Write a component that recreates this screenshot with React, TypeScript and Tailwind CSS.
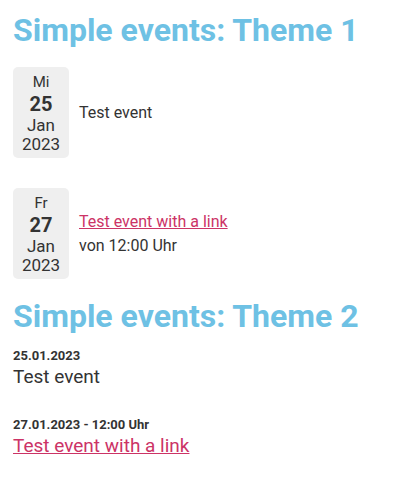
import React from 'react';

const font = { fontFamily: 'Roboto, "Noto Sans", sans-serif' };

type DayEvent = {
  weekday: string;
  day: string;
  month: string;
  year: string;
  title: string;
  href?: string;
  time?: string;
};

const events: DayEvent[] = [
  { weekday: 'Mi', day: '25', month: 'Jan', year: '2023', title: 'Test event' },
  {
    weekday: 'Fr',
    day: '27',
    month: 'Jan',
    year: '2023',
    title: 'Test event with a link',
    href: '#',
    time: 'von 12:00 Uhr',
  },
];

function DateBox({ e }: { e: DayEvent }) {
  return (
    <div className="w-[56px] h-[91px] shrink-0 rounded-[5px] bg-[#efefef] flex flex-col items-center justify-center text-[#333]">
      <span className="text-[15px] leading-[20px]">{e.weekday}</span>
      <span className="text-[20px] leading-[24px] font-bold">{e.day}</span>
      <span className="text-[17px] leading-[19px]">{e.month}</span>
      <span className="text-[17px] leading-[18px]">{e.year}</span>
    </div>
  );
}

export default function App() {
  return (
    <div className="min-h-screen bg-white px-[13px] pt-[11px] text-[#333]" style={font}>
      <h2 className="text-[32px] leading-[38px] font-bold text-[#6ec1e4]">Simple events: Theme 1</h2>

      <div className="mt-[18px] flex flex-col gap-[30px]">
        {events.map((e) => (
          <div key={e.day} className="flex items-center gap-[10px]">
            <DateBox e={e} />
            <div className="text-[16px] leading-[24px]">
              {e.href ? (
                <a href={e.href} className="text-[#cc3366] underline">
                  {e.title}
                </a>
              ) : (
                <span>{e.title}</span>
              )}
              {e.time && <div>{e.time}</div>}
            </div>
          </div>
        ))}
      </div>

      <h2 className="mt-[18px] text-[32px] leading-[38px] font-bold text-[#6ec1e4]">Simple events: Theme 2</h2>

      <div className="mt-[11px] flex flex-col gap-[27px]">
        <div>
          <div className="text-[13px] leading-[19px] font-bold">25.01.2023</div>
          <div className="text-[19px] leading-[23px]">Test event</div>
        </div>
        <div>
          <div className="text-[13px] leading-[19px] font-bold">27.01.2023 - 12:00 Uhr</div>
          <div className="text-[19px] leading-[23px]">
            <a href="#" className="text-[#cc3366] underline">
              Test event with a link
            </a>
          </div>
        </div>
      </div>
    </div>
  );
}
